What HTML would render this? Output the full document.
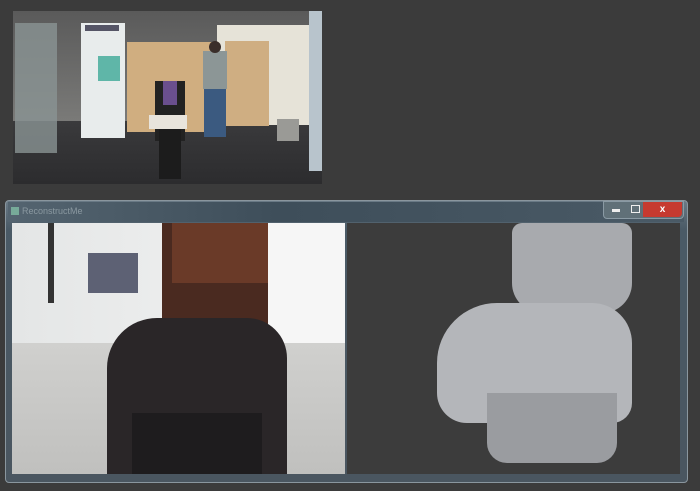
<!DOCTYPE html>
<html><head><style>
body{margin:0;width:700px;height:491px;background:#3b3b3b;position:relative;overflow:hidden;font-family:"Liberation Sans",sans-serif}
div{position:absolute}
</style></head><body>
<div style="left:13px;top:11px;width:309px;height:173px;background:#6a6a6a;overflow:hidden">
 <div style="left:0;top:0;width:309px;height:110px;background:linear-gradient(#5a5a5a,#7a7a78)"></div>
 <div style="left:0;top:110px;width:309px;height:63px;background:linear-gradient(#3a3a3c,#2c2c2e)"></div>
 <div style="left:2px;top:12px;width:42px;height:130px;background:#8a9494;opacity:.8"></div>
 <div style="left:68px;top:12px;width:44px;height:115px;background:#e8ecec"></div>
 <div style="left:72px;top:14px;width:34px;height:6px;background:#556"></div>
 <div style="left:85px;top:45px;width:22px;height:25px;background:#5fb6a8"></div>
 <div style="left:114px;top:31px;width:90px;height:90px;background:#d0ae80"></div>
 <div style="left:204px;top:14px;width:100px;height:100px;background:#e6e3d8"></div>
 <div style="left:212px;top:30px;width:44px;height:85px;background:#cfae82"></div>
 <div style="left:296px;top:0;width:13px;height:160px;background:#b8c4cc"></div>
 <div style="left:142px;top:70px;width:30px;height:60px;background:#222"></div>
 <div style="left:150px;top:70px;width:14px;height:24px;background:#6a4f8e"></div>
 <div style="left:136px;top:104px;width:38px;height:14px;background:#e8e4dc"></div>
 <div style="left:146px;top:118px;width:22px;height:50px;background:#1c1c1c"></div>
 <div style="left:190px;top:40px;width:24px;height:38px;background:#8c9696"></div>
 <div style="left:191px;top:78px;width:22px;height:48px;background:#3b5a80"></div>
 <div style="left:196px;top:30px;width:12px;height:12px;background:#3a2e2a;border-radius:6px"></div>
 <div style="left:264px;top:108px;width:22px;height:22px;background:#9a9a96"></div>
</div>
<div style="left:5px;top:200px;width:681px;height:281px;background:linear-gradient(180deg,#6a7a86,#4a5a66 10%,#4a5660);border:1px solid #8a969e;border-radius:4px"></div>
<div style="left:8px;top:202px;width:676px;height:20px;background:linear-gradient(90deg,#546470,#3e4e5a 40%,#4a5a66)"></div>
<div style="left:11px;top:207px;width:8px;height:8px;background:#7a9"></div>
<div style="left:22px;top:206px;font-size:9px;color:#8a98a0">ReconstructMe</div>
<div style="left:603px;top:201px;width:79px;height:16px;border-radius:0 0 4px 4px;background:#607078;border:1px solid #8a9aa4"></div>
<div style="left:643px;top:202px;width:39px;height:15px;background:#c63a30;border-radius:0 0 4px 0;color:#fff;font-size:10px;text-align:center;line-height:15px;font-weight:bold">x</div>
<div style="left:612px;top:209px;width:8px;height:3px;background:#eee"></div>
<div style="left:631px;top:205px;width:7px;height:6px;border:1px solid #eee"></div>
<div style="left:12px;top:223px;width:333px;height:251px;background:#d8d8d6;overflow:hidden">
 <div style="left:0;top:0;width:333px;height:120px;background:linear-gradient(90deg,#e4e6e6,#f4f4f4)"></div>
 <div style="left:0;top:120px;width:333px;height:131px;background:linear-gradient(#d0d0ce,#c0c0be)"></div>
 <div style="left:36px;top:0;width:6px;height:80px;background:#333"></div>
 <div style="left:76px;top:30px;width:50px;height:40px;background:#3a3e56;opacity:.8"></div>
 <div style="left:150px;top:0;width:112px;height:130px;background:#4a2a20;border-radius:0 0 30px 30px"></div>
 <div style="left:160px;top:0;width:100px;height:60px;background:#6a3a28"></div>
 <div style="left:256px;top:0;width:77px;height:120px;background:#f6f6f6"></div>
 <div style="left:95px;top:95px;width:180px;height:165px;background:#2a2628;border-radius:50px 40px 0 0"></div>
 <div style="left:120px;top:190px;width:130px;height:61px;background:#1e1c1e"></div>
</div>
<div style="left:347px;top:223px;width:333px;height:251px;background:#3c3c3c;overflow:hidden">
 <div style="left:165px;top:0;width:120px;height:90px;background:#a8aaae;border-radius:10px 10px 30px 30px"></div>
 <div style="left:90px;top:80px;width:195px;height:120px;background:#b4b6ba;border-radius:60px 40px 20px 30px"></div>
 <div style="left:140px;top:170px;width:130px;height:70px;background:#9a9ca0;border-radius:0 0 20px 20px"></div>
</div>
</body></html>
